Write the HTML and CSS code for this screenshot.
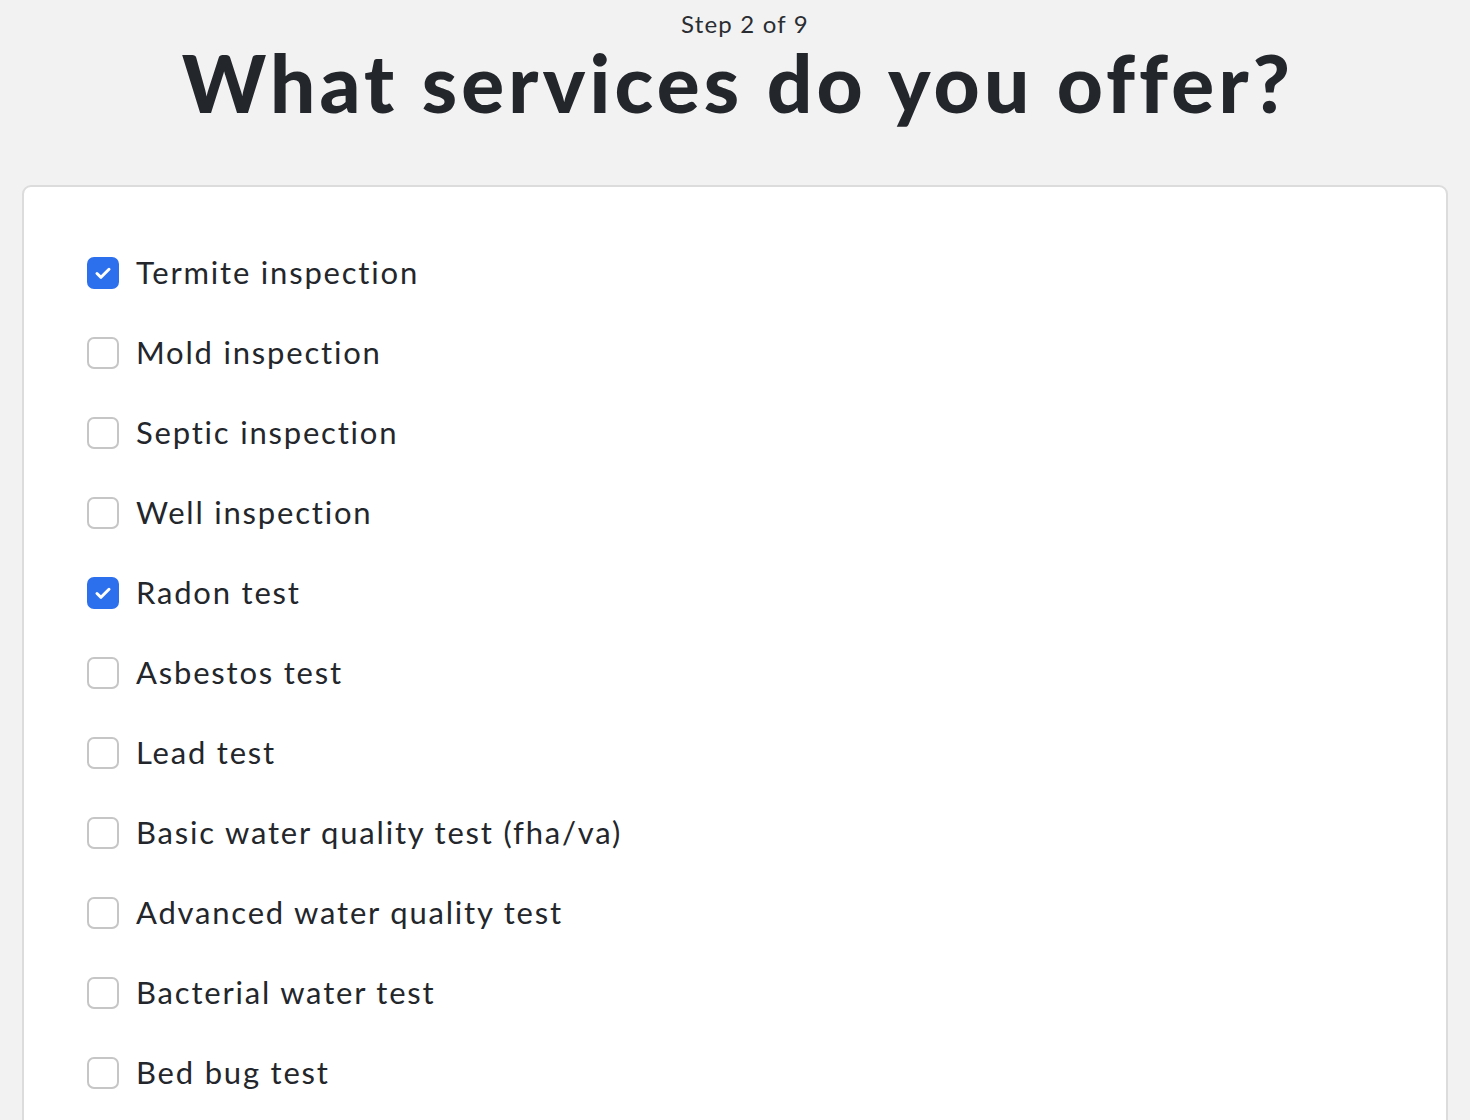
FILE: index.html
```html
<!DOCTYPE html>
<html>
<head>
<meta charset="utf-8">
<link rel="stylesheet" href="styles.css">
</head>
<body>
<header class="head">
  <div class="step">Step 2 of 9</div>
  <h1 class="title">What services do you offer?</h1>
</header>
<main class="card">
  <ul class="list">
    <li class="row"><span class="box checked"><svg viewBox="0 0 20 20" width="20" height="20"><path d="M4 10.5l4 3.8 8-8" fill="none" stroke="#fff" stroke-width="3" stroke-linecap="round" stroke-linejoin="round"/></svg></span><span class="label">Termite inspection</span></li>
    <li class="row"><span class="box"></span><span class="label">Mold inspection</span></li>
    <li class="row"><span class="box"></span><span class="label">Septic inspection</span></li>
    <li class="row"><span class="box"></span><span class="label">Well inspection</span></li>
    <li class="row"><span class="box checked"><svg viewBox="0 0 20 20" width="20" height="20"><path d="M4 10.5l4 3.8 8-8" fill="none" stroke="#fff" stroke-width="3" stroke-linecap="round" stroke-linejoin="round"/></svg></span><span class="label">Radon test</span></li>
    <li class="row"><span class="box"></span><span class="label">Asbestos test</span></li>
    <li class="row"><span class="box"></span><span class="label">Lead test</span></li>
    <li class="row"><span class="box"></span><span class="label">Basic water quality test (fha/va)</span></li>
    <li class="row"><span class="box"></span><span class="label">Advanced water quality test</span></li>
    <li class="row"><span class="box"></span><span class="label">Bacterial water test</span></li>
    <li class="row"><span class="box"></span><span class="label">Bed bug test</span></li>
  </ul>
</main>
</body>
</html>
```
FILE: styles.css
```css
html, body {
  margin: 0;
  padding: 0;
  background: #f2f2f2;
  font-family: Lato, "Open Sans", sans-serif;
  color: #23262b;
}
.head {
  display: flex;
  flex-direction: column;
  align-items: center;
  padding-top: 11px;
}
.step {
  font-size: 24px;
  line-height: 25px;
  color: #2a2d31;
  letter-spacing: 1.2px;
  margin-left: 20px;
}
.title {
  margin: 2px 0 0;
  font-size: 80px;
  line-height: 88px;
  font-weight: 900;
  letter-spacing: 4.2px;
  color: #23262b;
  padding-left: 6px;
}
.card {
  margin: 59px 22px 0 22px;
  background: #fff;
  border: 2px solid #dcdcdc;
  border-radius: 9px;
  padding: 46px 63px 60px;
}
.list {
  list-style: none;
  margin: 0;
  padding: 0;
  display: flex;
  flex-direction: column;
}
.row {
  height: 80px;
  display: flex;
  align-items: center;
  gap: 17px;
}
.box {
  box-sizing: border-box;
  width: 32px;
  height: 32px;
  border: 2px solid #c6c6c6;
  border-radius: 7px;
  background: #fff;
  display: flex;
  align-items: center;
  justify-content: center;
  flex-shrink: 0;
}
.box.checked {
  background: #2d70ee;
  border-color: #2d70ee;
}
.label {
  font-size: 31px;
  letter-spacing: 1.8px;
  color: #23262b;
  position: relative;
  top: -1px;
}
```
